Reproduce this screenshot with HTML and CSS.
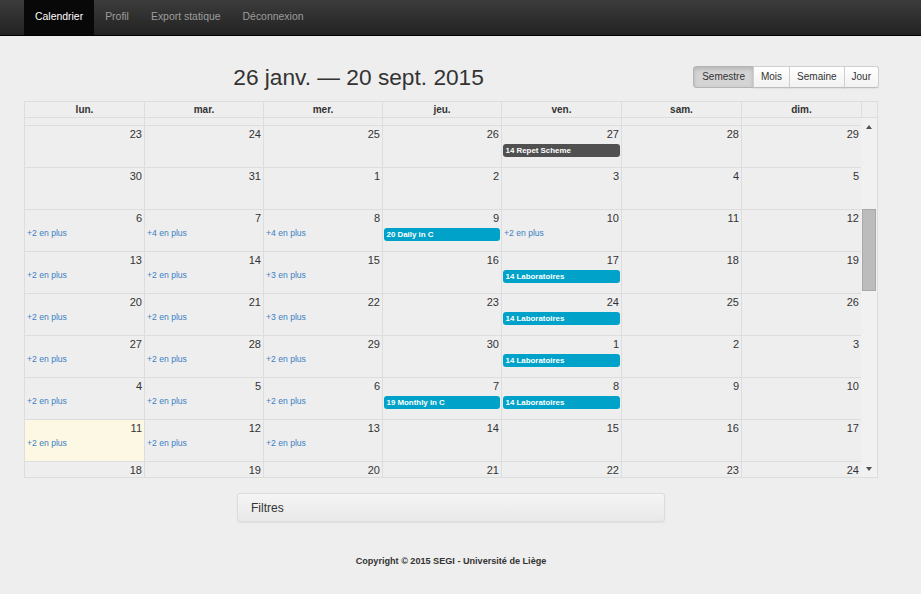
FILE: index.html
```html
<!DOCTYPE html>
<html lang="fr">
<head>
<meta charset="utf-8">
<title>Calendrier</title>
<link rel="stylesheet" href="styles.css">
</head>
<body>
<header class="navbar">
  <nav class="nav-inner">
    <a class="nav-item active">Calendrier</a>
    <a class="nav-item">Profil</a>
    <a class="nav-item">Export statique</a>
    <a class="nav-item">Déconnexion</a>
  </nav>
</header>

<main class="main">
  <div class="toolbar">
    <h2 class="title">26 janv. — 20 sept. 2015</h2>
    <div class="btn-group">
      <button class="btn active">Semestre</button>
      <button class="btn">Mois</button>
      <button class="btn">Semaine</button>
      <button class="btn">Jour</button>
    </div>
  </div>

  <div class="cal">
    <div class="cal-head">
      <div class="th">lun.</div>
      <div class="th">mar.</div>
      <div class="th">mer.</div>
      <div class="th">jeu.</div>
      <div class="th">ven.</div>
      <div class="th">sam.</div>
      <div class="th">dim.</div>
      <div class="th gutter"></div>
    </div>
    <div class="cal-body">
      <div class="weeks">
        <div class="week partial-top">
          <div class="day"></div><div class="day"></div><div class="day"></div><div class="day"></div><div class="day"></div><div class="day"></div><div class="day"></div>
        </div>
        <div class="week">
          <div class="day"><div class="num">23</div></div>
          <div class="day"><div class="num">24</div></div>
          <div class="day"><div class="num">25</div></div>
          <div class="day"><div class="num">26</div></div>
          <div class="day"><div class="num">27</div><div class="ev dark">14 Repet Scheme</div></div>
          <div class="day"><div class="num">28</div></div>
          <div class="day"><div class="num">29</div></div>
        </div>
        <div class="week">
          <div class="day"><div class="num">30</div></div>
          <div class="day"><div class="num">31</div></div>
          <div class="day"><div class="num">1</div></div>
          <div class="day"><div class="num">2</div></div>
          <div class="day"><div class="num">3</div></div>
          <div class="day"><div class="num">4</div></div>
          <div class="day"><div class="num">5</div></div>
        </div>
        <div class="week">
          <div class="day"><div class="num">6</div><a class="more">+2 en plus</a></div>
          <div class="day"><div class="num">7</div><a class="more">+4 en plus</a></div>
          <div class="day"><div class="num">8</div><a class="more">+4 en plus</a></div>
          <div class="day"><div class="num">9</div><div class="ev">20 Daily in C</div></div>
          <div class="day"><div class="num">10</div><a class="more">+2 en plus</a></div>
          <div class="day"><div class="num">11</div></div>
          <div class="day"><div class="num">12</div></div>
        </div>
        <div class="week">
          <div class="day"><div class="num">13</div><a class="more">+2 en plus</a></div>
          <div class="day"><div class="num">14</div><a class="more">+2 en plus</a></div>
          <div class="day"><div class="num">15</div><a class="more">+3 en plus</a></div>
          <div class="day"><div class="num">16</div></div>
          <div class="day"><div class="num">17</div><div class="ev">14 Laboratoires</div></div>
          <div class="day"><div class="num">18</div></div>
          <div class="day"><div class="num">19</div></div>
        </div>
        <div class="week">
          <div class="day"><div class="num">20</div><a class="more">+2 en plus</a></div>
          <div class="day"><div class="num">21</div><a class="more">+2 en plus</a></div>
          <div class="day"><div class="num">22</div><a class="more">+3 en plus</a></div>
          <div class="day"><div class="num">23</div></div>
          <div class="day"><div class="num">24</div><div class="ev">14 Laboratoires</div></div>
          <div class="day"><div class="num">25</div></div>
          <div class="day"><div class="num">26</div></div>
        </div>
        <div class="week">
          <div class="day"><div class="num">27</div><a class="more">+2 en plus</a></div>
          <div class="day"><div class="num">28</div><a class="more">+2 en plus</a></div>
          <div class="day"><div class="num">29</div><a class="more">+2 en plus</a></div>
          <div class="day"><div class="num">30</div></div>
          <div class="day"><div class="num">1</div><div class="ev">14 Laboratoires</div></div>
          <div class="day"><div class="num">2</div></div>
          <div class="day"><div class="num">3</div></div>
        </div>
        <div class="week">
          <div class="day"><div class="num">4</div><a class="more">+2 en plus</a></div>
          <div class="day"><div class="num">5</div><a class="more">+2 en plus</a></div>
          <div class="day"><div class="num">6</div><a class="more">+2 en plus</a></div>
          <div class="day"><div class="num">7</div><div class="ev">19 Monthly in C</div></div>
          <div class="day"><div class="num">8</div><div class="ev">14 Laboratoires</div></div>
          <div class="day"><div class="num">9</div></div>
          <div class="day"><div class="num">10</div></div>
        </div>
        <div class="week">
          <div class="day today"><div class="num">11</div><a class="more">+2 en plus</a></div>
          <div class="day"><div class="num">12</div><a class="more">+2 en plus</a></div>
          <div class="day"><div class="num">13</div><a class="more">+2 en plus</a></div>
          <div class="day"><div class="num">14</div></div>
          <div class="day"><div class="num">15</div></div>
          <div class="day"><div class="num">16</div></div>
          <div class="day"><div class="num">17</div></div>
        </div>
        <div class="week">
          <div class="day"><div class="num">18</div></div>
          <div class="day"><div class="num">19</div></div>
          <div class="day"><div class="num">20</div></div>
          <div class="day"><div class="num">21</div></div>
          <div class="day"><div class="num">22</div></div>
          <div class="day"><div class="num">23</div></div>
          <div class="day"><div class="num">24</div></div>
        </div>
      </div>
      <div class="scrollbar">
        <div class="sb-btn"><span class="arrow-up"></span></div>
        <div class="sb-thumb"></div>
        <div class="sb-fill"></div>
        <div class="sb-btn"><span class="arrow-down"></span></div>
      </div>
    </div>
  </div>

  <div class="panel">Filtres</div>

  <footer class="footer">Copyright © 2015 SEGI - Université de Liège</footer>
</main>
</body>
</html>
```

FILE: styles.css
```css
* { box-sizing: border-box; }

body {
  margin: 0;
  background: #eeeeee;
  font-family: "Liberation Sans", Arial, sans-serif;
  color: #333;
}

/* Navbar */
.navbar {
  height: 36px;
  background: linear-gradient(#3c3c3c, #222222);
  border-bottom: 1px solid #000;
}
.nav-inner {
  display: flex;
  padding-left: 24px;
  height: 35px;
}
.nav-item {
  display: block;
  padding: 0 11px;
  line-height: 34px;
  font-size: 10.45px;
  color: #9d9d9d;
  text-decoration: none;
}
.nav-item.active {
  background: #080808;
  color: #fff;
}

/* Main */
.main {
  width: 854px;
  margin: 30px 0 0 24px;
}

.toolbar {
  display: flex;
  align-items: center;
  height: 22px;
  margin-bottom: 13px;
}
.title {
  flex: 1;
  margin: 0;
  text-align: center;
  font-size: 22.7px;
  font-weight: normal;
  line-height: 22px;
  color: #333;
}
.btn-group {
  display: flex;
  height: 22px;
  margin-right: -1px;
}
.btn {
  height: 22px;
  padding: 0 7px;
  margin: 0 0 0 -1px;
  font-family: "Liberation Sans", Arial, sans-serif;
  font-size: 10px;
  line-height: 20px;
  color: #333;
  background: linear-gradient(#ffffff, #f2f2f2);
  border: 1px solid #cfcfcf;
  border-bottom-color: #bdbdbd;
  box-shadow: 0 1px 1px rgba(0,0,0,0.05);
}
.btn:first-child {
  margin-left: 0;
  padding: 0 8px;
  border-radius: 3px 0 0 3px;
}
.btn:last-child {
  border-radius: 0 3px 3px 0;
}
.btn.active {
  background: #d4d4d4;
  border-color: #b5b5b5;
  box-shadow: inset 0 2px 4px rgba(0,0,0,0.15);
}

/* Calendar */
.cal {
  width: 854px;
  border: 1px solid #dddddd;
}
.cal-head {
  display: grid;
  grid-template-columns: 119px 119px 119px 119px 120px 120px 120px 16px;
  border-bottom: 1px solid #dddddd;
}
.th {
  height: 15px;
  line-height: 15px;
  font-size: 10px;
  font-weight: bold;
  text-align: center;
  color: #333;
  border-left: 1px solid #dddddd;
}
.th:first-child { border-left: 0; }

.cal-body {
  display: flex;
  height: 359px;
  overflow: hidden;
}
.weeks {
  flex: 1;
  min-width: 0;
}
.week {
  display: grid;
  grid-template-columns: 119px 119px 119px 119px 120px 120px 120px;
  height: 42px;
  border-top: 1px solid #dddddd;
}
.week.partial-top {
  height: 7px;
  border-top: 0;
}
.day {
  border-left: 1px solid #dddddd;
  min-width: 0;
  overflow: hidden;
}
.day:first-child { border-left: 0; }
.day.today { background: #fcf8e3; }

.num {
  padding: 2px 2px 0 0;
  text-align: right;
  font-size: 11px;
  line-height: 13px;
  color: #333;
}
.ev {
  margin: 3px 1px 0 1px;
  height: 13px;
  padding: 0 2.5px;
  border-radius: 3px;
  background: #00a2c9;
  color: #fff;
  font-size: 7.9px;
  font-weight: bold;
  line-height: 13px;
  white-space: nowrap;
  overflow: hidden;
}
.ev.dark { background: #505050; }
.more {
  display: block;
  margin-top: 2px;
  padding-left: 2px;
  font-size: 8.6px;
  line-height: 13px;
  color: #3b7fc4;
  text-decoration: none;
}

/* Scrollbar */
.scrollbar {
  width: 16px;
  display: flex;
  flex-direction: column;
  background: #f1f1f1;
}
.sb-btn {
  height: 17px;
  display: flex;
  align-items: center;
  justify-content: center;
}
.arrow-up {
  width: 0;
  height: 0;
  border-left: 3.5px solid transparent;
  border-right: 3.5px solid transparent;
  border-bottom: 4px solid #505050;
}
.arrow-down {
  width: 0;
  height: 0;
  border-left: 3.5px solid transparent;
  border-right: 3.5px solid transparent;
  border-top: 4px solid #505050;
}
.sb-thumb {
  height: 82px;
  margin: 74px 1px 0 1px;
  background: #bcbcbc;
  border: 1px solid #a8a8a8;
}
.sb-fill { flex: 1; }

/* Panel */
.panel {
  width: 428px;
  height: 29px;
  margin: 15px auto 0;
  padding-left: 13px;
  font-size: 12px;
  line-height: 28px;
  color: #333;
  background: linear-gradient(#f5f5f5, #e8e8e8);
  border: 1px solid #dcdcdc;
  border-radius: 3px;
  box-shadow: 0 1px 2px rgba(0,0,0,0.06);
}

.footer {
  margin-top: 33px;
  text-align: center;
  font-size: 9.1px;
  font-weight: bold;
  line-height: 12px;
  color: #333;
}
```
